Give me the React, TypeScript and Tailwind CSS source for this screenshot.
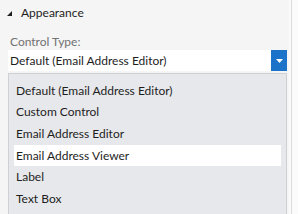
import React from "react";

const items = [
  "Default (Email Address Editor)",
  "Custom Control",
  "Email Address Editor",
  "Email Address Viewer",
  "Label",
  "Text Box",
];

export default function App() {
  return (
    <div
      className="w-[298px] h-[214px] overflow-hidden bg-[#f5f5f5] flex text-[12px] text-[#1e1e1e]"
      style={{ fontFamily: 'Lato, "Noto Sans", sans-serif' }}
    >
      <div className="w-[289px] flex flex-col">
        <div className="h-[25px] flex items-center pl-[7px] gap-[9px]">
          <svg width="5" height="5" viewBox="0 0 5 5" className="mt-[1px]">
            <polygon points="0,5 5,0 5,5" fill="#1e1e1e" />
          </svg>
          <span className="leading-none">Appearance</span>
        </div>
        <div className="pl-[10px] pt-[9px] text-[#717171] leading-[15px]">Control Type:</div>
        <div className="ml-[8px] mt-[1px] w-[279px] h-[21px] flex bg-white">
          <div className="flex-1 pl-[2px] flex items-center leading-none">Default (Email Address Editor)</div>
          <div className="w-[16px] h-[21px] bg-[#1a73c8] flex items-center justify-center">
            <svg width="7" height="4" viewBox="0 0 7 4">
              <polygon points="0,0 7,0 3.5,4" fill="#ffffff" />
            </svg>
          </div>
        </div>
        <div className="ml-[8px] mt-[2px] w-[279px] flex-1 bg-[#e7e8eb] border border-[#cfd0d3] border-b-0 pt-[6px] px-[5px]">
          {items.map((it, i) => (
            <div
              key={it}
              className={
                "h-[21.6px] flex items-center pl-[2px] " +
                (i === 3 ? "bg-white" : "")
              }
            >
              {it}
            </div>
          ))}
        </div>
      </div>
      <div className="w-[2px] bg-[#fafafa]" />
      <div className="w-[1px] bg-[#dcdcdc]" />
      <div className="flex-1 bg-[#fbfbfb]" />
    </div>
  );
}
